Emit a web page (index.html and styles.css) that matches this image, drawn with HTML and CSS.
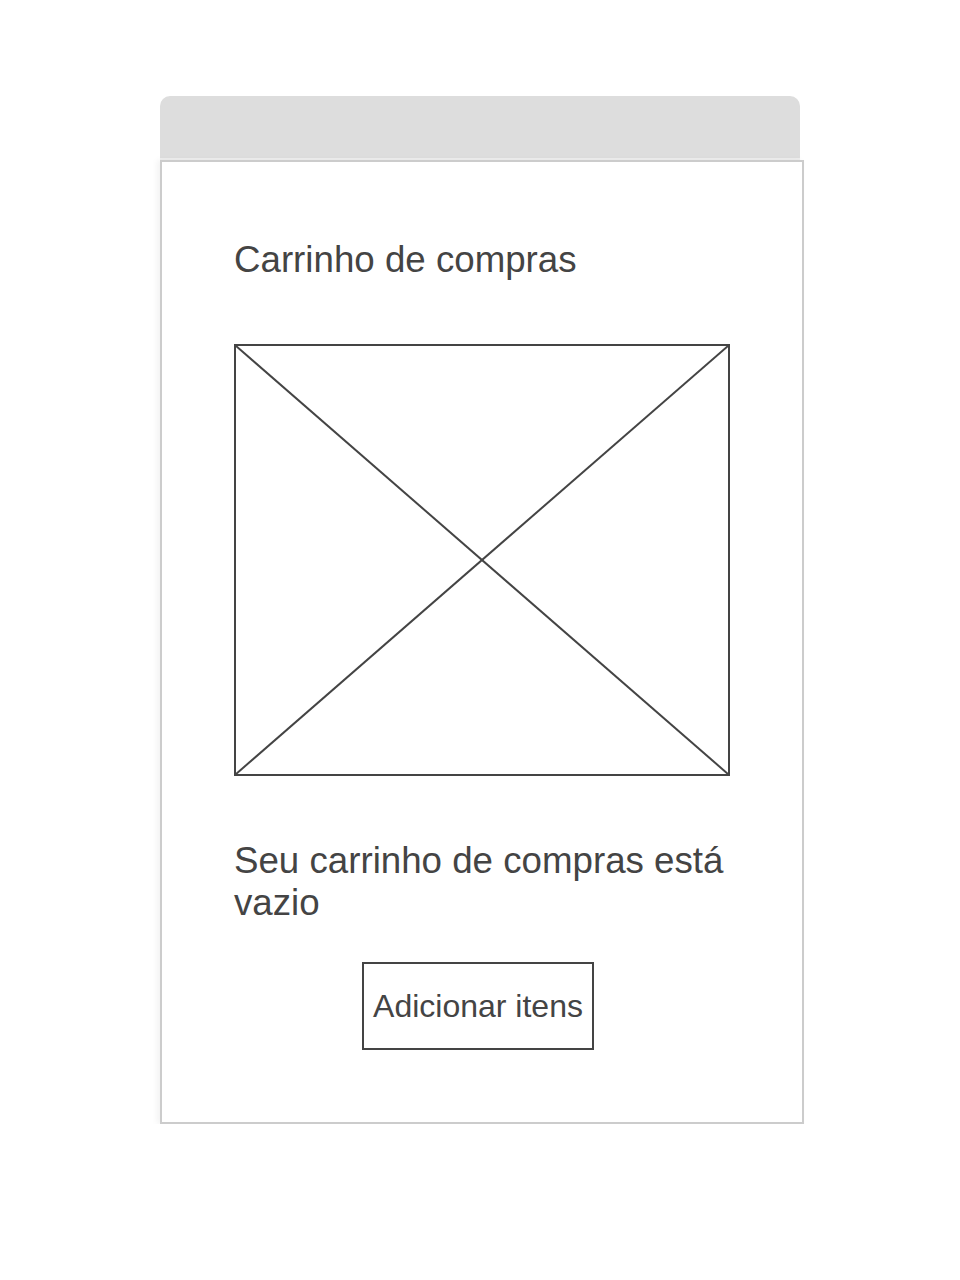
FILE: index.html
```html
<!DOCTYPE html>
<html lang="pt">
<head>
<meta charset="utf-8">
<title>Carrinho de compras</title>
<link rel="stylesheet" href="styles.css">
</head>
<body>
<div class="page">
  <div class="frame">
    <div class="tabbar"></div>
    <div class="card">
      <h1 class="title">Carrinho de compras</h1>
      <div class="placeholder">
        <svg class="cross" viewBox="0 0 492 428" preserveAspectRatio="none" width="492" height="428">
          <line x1="0" y1="0" x2="492" y2="428" />
          <line x1="492" y1="0" x2="0" y2="428" />
        </svg>
      </div>
      <p class="message">Seu carrinho de compras está vazio</p>
      <div class="actions">
        <button class="btn" type="button">Adicionar itens</button>
      </div>
    </div>
  </div>
</div>
</body>
</html>
```
FILE: styles.css
```css
html, body {
  margin: 0;
  padding: 0;
  background: #ffffff;
}
body {
  font-family: "Liberation Sans", Arial, sans-serif;
  color: #444444;
}
.page {
  padding: 96px 0 0 160px;
}
.frame {
  width: 644px;
}
.tabbar {
  width: 640px;
  height: 62px;
  background: #dddddd;
  border-radius: 10px 10px 0 0;
  border-bottom: 2px solid #eeeeee;
}
.card {
  box-sizing: border-box;
  width: 644px;
  height: 964px;
  border: 2px solid #cccccc;
  padding: 77px 72px 72px 72px;
  box-shadow: -3px 0 6px rgba(0, 0, 0, 0.05);
}
.title {
  margin: 0;
  font-size: 36.7px;
  font-weight: normal;
  line-height: 42px;
}
.placeholder {
  box-sizing: border-box;
  margin-top: 63px;
  width: 496px;
  height: 432px;
  border: 2px solid #444444;
}
.cross {
  display: block;
  width: 100%;
  height: 100%;
}
.cross line {
  stroke: #444444;
  stroke-width: 2;
}
.message {
  margin: 64px 0 0 0;
  font-size: 36.7px;
  line-height: 42px;
}
.actions {
  margin-top: 38px;
  padding-left: 128px;
}
.btn {
  box-sizing: border-box;
  width: 232px;
  height: 88px;
  border: 2px solid #444444;
  background: #ffffff;
  color: #444444;
  font-family: "Liberation Sans", Arial, sans-serif;
  font-size: 32px;
  padding: 0;
}
```
